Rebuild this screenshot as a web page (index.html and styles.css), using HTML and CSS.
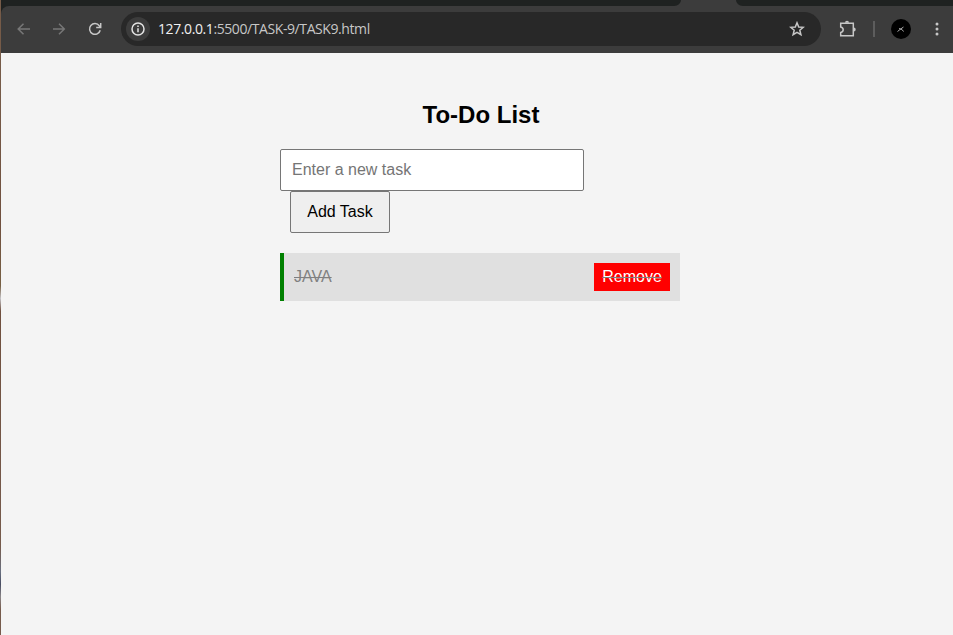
FILE: index.html
```html
<!DOCTYPE html>
<html lang="en">
<head>
<meta charset="utf-8">
<title>To-Do List</title>
<link rel="stylesheet" href="styles.css">
</head>
<body>
<div class="desktop-edge"></div>
<div class="window">
  <header class="chrome">
    <div class="tabstrip"><span class="tabs-left"></span><span class="tabs-right"></span></div>
    <div class="toolbar">
      <svg class="icon dim back" viewBox="0 0 16 16"><path d="M15 8H3.500M8.500 2.700 3.200 8l5.300 5.300"/></svg>
      <svg class="icon dim forward" viewBox="0 0 16 16"><path d="M2 8h11.500M8 2.700 13.300 8 8 13.300"/></svg>
      <svg class="icon reload" viewBox="0 0 16 16"><path d="M13.200 9.200A5.400 5.400 0 1 1 12.300 4.700L13.500 6.200M13.700 2v4.500H9.200"/></svg>
      <div class="omnibox">
        <span class="site-info"><svg class="icon info" viewBox="0 0 16 16"><circle cx="8" cy="8" r="6"/><path d="M8 7.200v4M8 4.500v1.500"/></svg></span>
        <span class="url"><span class="host">127.0.0.1</span>:5500/TASK-9/TASK9.html</span>
        <svg class="icon star" viewBox="0 0 16 16"><path d="M8 1.800 9.700 6l4.600.3-3.500 2.900 1.100 4.500L8 11.300l-3.900 2.400 1.100-4.500L1.700 6.300 6.300 6Z"/></svg>
      </div>
      <svg class="icon puzzle" viewBox="0 0 18 18"><path d="M1.700 3.200h12.600v12.600H1.700v-3.300q2.500-.5 2.500-2.700T1.700 7Z"/><path class="knob" d="M6 2.700a2 2 0 0 1 4 0ZM14.700 7.500a2 2 0 0 1 0 4Z"/></svg>
      <span class="divider"></span>
      <span class="avatar"><svg viewBox="0 0 20 20"><path d="M6.500 12.500 9 10.500 12.500 8M8 9.500l3 1 1.500 2"/></svg></span>
      <svg class="menu" viewBox="0 0 4 14"><circle cx="2" cy="2" r="1.500"/><circle cx="2" cy="7" r="1.500"/><circle cx="2" cy="12" r="1.500"/></svg>
    </div>
  </header>
  <main class="todo">
    <h2>To-Do List</h2>
    <input class="task-input" type="text" placeholder="Enter a new task">
    <button class="add-button">Add Task</button>
    <ul class="tasks">
      <li class="task completed">JAVA<button class="remove">Remove</button></li>
    </ul>
  </main>
</div>
</body>
</html>
```
FILE: styles.css
```css
* { box-sizing: border-box; }
body {
  margin: 0;
  height: 635px;
  display: flex;
  overflow: hidden;
  background: #f4f4f4;
  font-family: "Liberation Sans", Arial, sans-serif;
}
.desktop-edge {
  width: 1px;
  background: linear-gradient(#765b48 0 14%, #70503f 35%, #776044 45%, #c5c4c8 47%, #70503f 49%, #765b4c 86%, #697080 90%, #484d62 92%, #8a8587 94%, #765b4c 96%);
}
.window { flex: 1; }
.chrome { height: 53px; background: #1f2221; }
.tabstrip {
  height: 6px;
  display: flex;
  justify-content: space-between;
  background: #3c3c3c;
}
.tabs-left { width: 680px; background: #1f2221; border-bottom-right-radius: 9px 8px; }
.tabs-right { width: 217px; background: #1f2221; border-bottom-left-radius: 9px 8px; }
.toolbar {
  height: 47px;
  display: flex;
  align-items: center;
  padding: 0 0 1px 14px;
  background: #3c3c3c;
  border-top-left-radius: 8px;
}
.icon {
  width: 16px;
  height: 16px;
  flex: none;
  fill: none;
  stroke: #c7c7c7;
  stroke-width: 1.5;
}
.dim { stroke: #777; }
.forward { margin-left: 20px; }
.reload { margin-left: 20px; }
.omnibox {
  width: 700px;
  height: 34px;
  margin-left: 18px;
  padding: 0 16px 0 5px;
  display: flex;
  align-items: center;
  border-radius: 17px;
  background: #282828;
}
.site-info {
  width: 24px;
  height: 24px;
  display: grid;
  place-items: center;
  border-radius: 50%;
  background: #3c3c3c;
}
.info { stroke: #e3e3e3; }
.url {
  margin-left: 8px;
  flex: 1;
  color: #c7c7c7;
  font: 14px/20px "Open Sans", "Noto Sans", sans-serif;
  letter-spacing: -0.41px;
}
.host { color: #f0f0f0; }
.puzzle { width: 18px; height: 18px; margin-left: 18px; }
.puzzle .knob { fill: #c7c7c7; stroke: none; }
.divider { width: 2px; height: 16px; margin-left: 16px; background: #5d5d5d; }
.avatar {
  width: 20px;
  height: 20px;
  margin-left: 16px;
  border-radius: 50%;
  background: #000;
}
.avatar svg { display: block; fill: none; stroke: #aaa; stroke-width: 1; }
.menu { width: 4px; height: 14px; margin-left: 24px; fill: #c7c7c7; }
.todo { width: 400px; margin: 48px 0 0 279px; }
h2 {
  margin: 0 0 20px;
  height: 28px;
  font-size: 24px;
  line-height: 28px;
  text-align: center;
  text-indent: 2px;
}
.task-input, .add-button {
  display: block;
  height: 42px;
  border: 1px solid #767676;
  border-radius: 2px;
  font: 16px "Liberation Sans", Arial, sans-serif;
}
.task-input { width: 304px; padding: 10px 11px; background: #fff; }
.task-input::placeholder { color: #757575; }
.add-button { width: 100px; margin-left: 10px; padding: 0; color: #000; background: #efefef; }
.tasks { margin: 20px 0 0; padding: 0; list-style: none; }
.task {
  height: 48px;
  display: flex;
  justify-content: space-between;
  align-items: center;
  padding: 10px;
  border-left: 4px solid green;
  background: #e0e0e0;
  font-size: 16px;
}
.completed { color: gray; text-decoration: line-through; }
.remove {
  width: 76px;
  height: 28px;
  padding: 0;
  border: 0;
  color: #fff;
  background: #f00;
  font: 16px "Liberation Sans", Arial, sans-serif;
}
```
